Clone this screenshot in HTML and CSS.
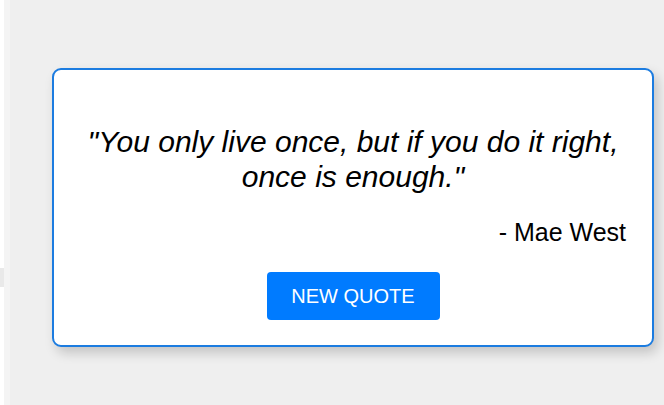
FILE: index.html
```html
<!DOCTYPE html>
<html>
<head>
<meta charset="utf-8">
<link rel="stylesheet" href="styles.css">
</head>
<body>
<div class="page">
  <div class="edge"><div class="edge-mark"></div></div>
  <div class="edge2"></div>
  <main class="main">
    <div class="card">
      <p class="quote">"You only live once, but if you do it right, once is enough."</p>
      <p class="author">- Mae West</p>
      <div class="actions"><button class="btn">NEW QUOTE</button></div>
    </div>
  </main>
</div>
</body>
</html>
```
FILE: styles.css
```css
html, body {
  margin: 0;
  padding: 0;
  height: 100%;
}
body {
  background: #efefef;
  font-family: "Liberation Sans", Arial, sans-serif;
  overflow: hidden;
}
.page {
  display: flex;
  height: 405px;
}
.edge {
  width: 4px;
  background: #ffffff;
  padding-top: 268px;
  box-sizing: border-box;
}
.edge-mark {
  height: 19px;
  background: #e9e9e9;
}
.edge2 {
  width: 6px;
  background: #f4f4f4;
}
.main {
  flex: 1;
  padding-top: 68px;
  padding-left: 42px;
}
.card {
  width: 602px;
  height: 279px;
  box-sizing: border-box;
  background: #fff;
  border: 2px solid #1c7ce0;
  border-radius: 9px;
  box-shadow: 4px 6px 12px rgba(0,0,0,0.18);
  padding: 54px 26px 0;
  display: flex;
  flex-direction: column;
}
.quote {
  margin: 0;
  font-style: italic;
  font-size: 30px;
  line-height: 35px;
  text-align: center;
  color: #000;
}
.author {
  margin: 24px 0 0;
  text-align: right;
  font-size: 25px;
  line-height: 29px;
  color: #000;
}
.actions {
  display: flex;
  justify-content: center;
  margin-top: 25px;
}
.btn {
  background: #007bff;
  color: #fff;
  border: none;
  border-radius: 4px;
  font-family: "Liberation Sans", Arial, sans-serif;
  font-size: 20px;
  line-height: 24px;
  padding: 12px 24px;
  width: 173px;
}
```
